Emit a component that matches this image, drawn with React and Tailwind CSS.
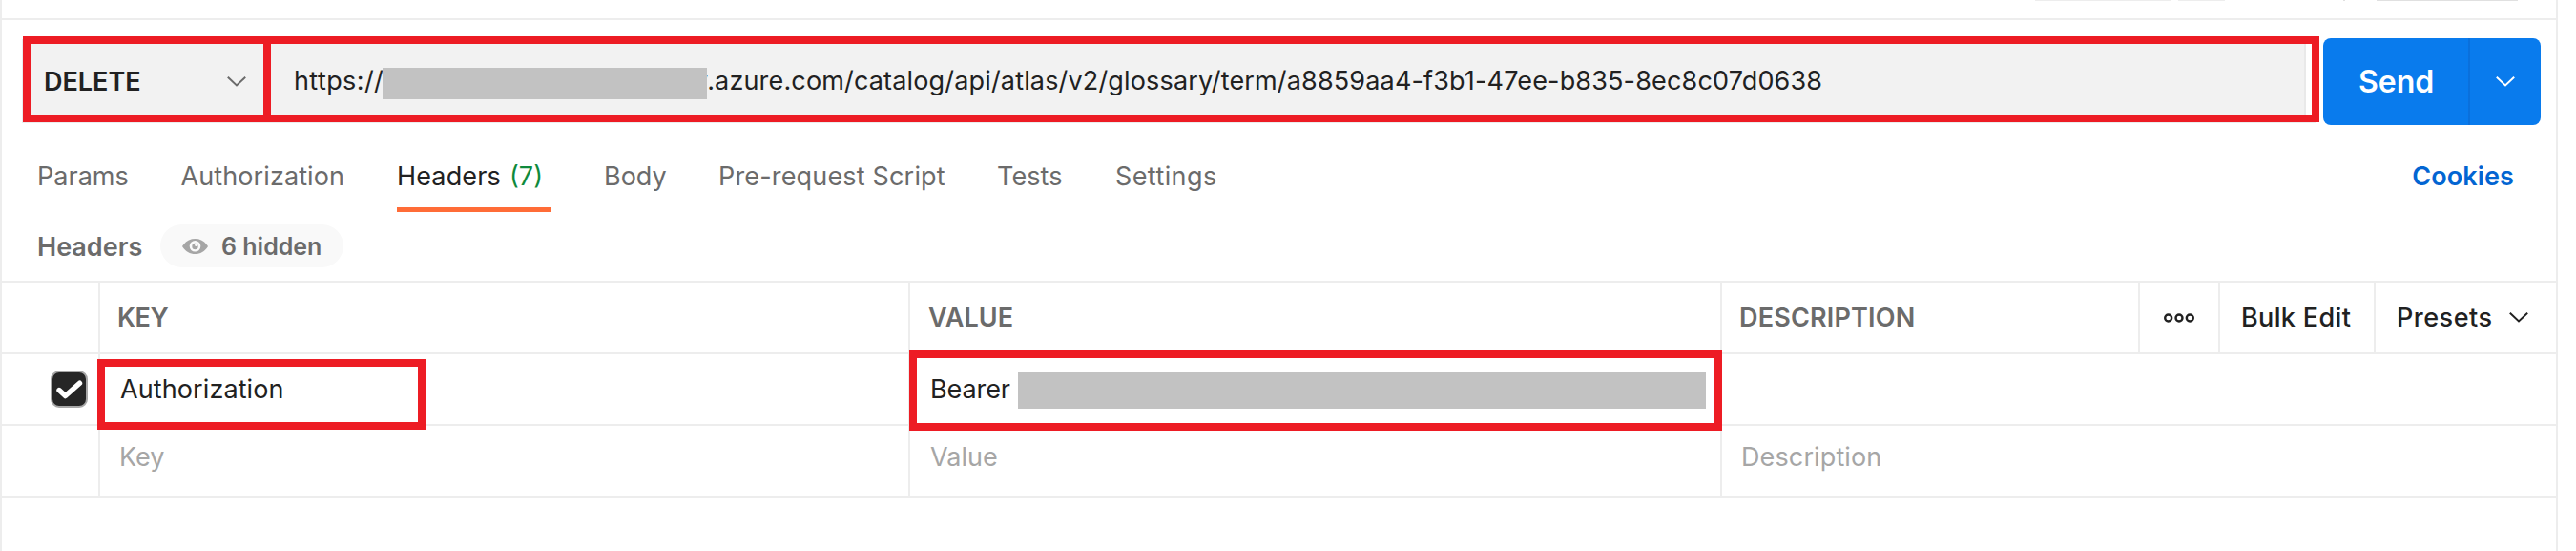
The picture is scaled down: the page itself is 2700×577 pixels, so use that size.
import React from "react";

function Chevron({ className }) {
  return (
    <svg viewBox="0 0 20 11" className={`h-[11px] w-5 shrink-0 ${className}`} fill="none" stroke="currentColor" strokeWidth="2">
      <path d="M0.8 0.8 10 9.4 19.2 0.8" />
    </svg>
  );
}

function EyeIcon() {
  return (
    <svg viewBox="0 0 27 16" className="h-4 w-[27px] shrink-0">
      <path d="M0 8C3.5 2.6 8 0 13.5 0S23.5 2.6 27 8C23.5 13.4 19 16 13.5 16S3.5 13.4 0 8Z" fill="#a6a6a6" />
      <circle cx="13.5" cy="7.8" r="5.8" fill="#fafafa" />
      <circle cx="13.5" cy="8" r="3.2" fill="#a6a6a6" />
      <circle cx="14.8" cy="6.4" r="1.7" fill="#fafafa" />
    </svg>
  );
}

function Checkbox() {
  return (
    <span className="flex size-[39px] items-center justify-center rounded-[9px] border-2 border-[#a8a8a8] bg-[#262626]">
      <svg viewBox="0 0 35 35" className="size-[35px]" fill="none" stroke="#fff" strokeWidth="5.4" strokeLinecap="round" strokeLinejoin="round">
        <path d="M7 18.6 13.5 24.6 28.5 11.2" />
      </svg>
    </span>
  );
}

function MoreIcon() {
  return (
    <svg viewBox="0 0 32 10" className="h-2.5 w-8" fill="none" stroke="#212121" strokeWidth="2.4">
      <circle cx="4.7" cy="5" r="3.5" />
      <circle cx="16" cy="5" r="3.5" />
      <circle cx="27.3" cy="5" r="3.5" />
    </svg>
  );
}

function TopStrip() {
  return (
    <div className="flex h-[21px] items-start border-b-2 border-[#ededed] pl-[2131px]">
      <span className="h-px w-[142px] bg-[#ededed]" />
      <span className="ml-2 h-px w-[49px] bg-[#ededed]" />
      <span className="ml-[124px] h-px w-0.5 bg-[#e0e0e0]" />
      <span className="ml-[33px] h-px w-[148px] bg-[#e0e0e0]" />
    </div>
  );
}

function RequestBar() {
  return (
    <div className="flex h-[109px] pt-[17px] pl-[19px]">
      <div className="h-[92px] w-[2410px]">
        <div className="ml-[3px] flex h-[90px] w-[2407px] border-8 border-[#ed1c24] bg-white shadow-[-2px_2px_0_-1px_#e9eded]">
          <div className="flex w-[244px] items-center justify-between bg-[#f2f2f2] pr-[18px] pl-[14px]">
            <span className="mt-1.5 text-[27px] leading-8 font-semibold text-[#212121]">DELETE</span>
            <Chevron className="mt-1 text-[#6b6b6b]" />
          </div>
          <div className="w-2 shrink-0 bg-[#ed1c24]" />
          <div className="flex w-[2133px] items-center border-r-2 border-[#e9e9e9] bg-[#f2f2f2] pl-6 text-[27px] leading-8 text-[#212121]">
            <span className="mt-1 w-[93px] shrink-0 tracking-[0.4px]">https://</span>
            <span className="relative z-10 mt-[9px] h-[33px] w-[340px] shrink-0 bg-[#c2c2c2]" />
            <span className="mt-1 -ml-[14px] tracking-[0.16px]">y.azure.com/catalog/api/atlas/v2/glossary/term/a8859aa4-f3b1-47ee-b835-8ec8c07d0638</span>
          </div>
        </div>
      </div>
      <div className="mt-0.5 ml-1 flex h-[91px] w-[228px] overflow-hidden rounded-lg bg-[#097bed] text-white">
        <span className="flex w-[152px] items-center pl-[37px] text-[32px] leading-10 font-semibold">Send</span>
        <span className="w-0.5 bg-[#0a70dc]" />
        <span className="flex flex-1 items-center justify-center">
          <Chevron className="mr-px" />
        </span>
      </div>
    </div>
  );
}

function Tabs() {
  return (
    <div className="flex h-[92px] items-start pt-[37px] pl-[37px] text-[27px] leading-9 text-[#6b6b6b]">
      <span className="w-[150.5px] tracking-[0.03px]">Params</span>
      <span className="w-[226.5px] tracking-[0.1px]">Authorization</span>
      <span className="flex h-[55px] w-[162px] border-b-[5px] border-[#ff6c37]">
        <span className="w-[118px] tracking-[0.15px] text-[#212121]">Headers</span>
        <span className="text-[#0f8a3c]">(7)</span>
      </span>
      <span className="ml-[55px] w-[120px]">Body</span>
      <span className="w-[292px] tracking-[0.17px]">Pre-request Script</span>
      <span className="w-[124px] tracking-[0.1px]">Tests</span>
      <span className="tracking-[0.4px]">Settings</span>
      <span className="mr-[44px] ml-auto font-semibold tracking-[0.1px] text-[#0265d2]">Cookies</span>
    </div>
  );
}

function HeadersTitle() {
  return (
    <div className="flex h-[72px] items-start pt-[13px] pl-[37px] font-semibold text-[#6b6b6b]">
      <span className="w-[129px] text-[27px] leading-[48px]">Headers</span>
      <span className="flex h-[45px] w-48 items-center rounded-full bg-[#f9f9f9] pl-[23px]">
        <EyeIcon />
        <span className="ml-[14px] text-[25px] leading-8">6 hidden</span>
      </span>
    </div>
  );
}

const COLUMNS = "grid grid-cols-[101px_849px_851px_1fr] h-[75px] border-b-2 border-[#ededed] text-[27px] leading-8";
const CELL = "border-l-2 border-[#ededed]";

function HeadersTable() {
  return (
    <div className="border-t-2 border-[#ededed]">
      <div className={`${COLUMNS} font-semibold text-[#6b6b6b]`}>
        <span />
        <span className={`${CELL} flex items-center pl-[18px] tracking-[-0.4px]`}>KEY</span>
        <span className={`${CELL} flex items-center pl-[19px] tracking-[0.1px]`}>VALUE</span>
        <span className={`${CELL} flex`}>
          <span className="flex flex-1 items-center pl-[18px] tracking-[0.18px]">DESCRIPTION</span>
          <span className={`${CELL} flex w-[84px] items-center justify-center`}>
            <MoreIcon />
          </span>
          <span className={`${CELL} flex w-[163px] items-center pl-[22px] font-medium tracking-[0.35px] text-[#212121]`}>Bulk Edit</span>
          <span className={`${CELL} flex w-[191px] items-center pl-[22px] font-medium tracking-[0.5px] text-[#212121]`}>
            <span className="w-[118px]">Presets</span>
            <Chevron className="text-[#212121]" />
          </span>
        </span>
      </div>
      <div className={`${COLUMNS} text-[#212121]`}>
        <span className="flex items-center pl-[51px]">
          <Checkbox />
        </span>
        <span className={`${CELL} relative`}>
          <span className="absolute top-[5px] -left-[3px] flex h-[74px] w-[344px] items-center border-8 border-[#ed1c24] bg-white pb-2.5 pl-4 tracking-[0.1px]">
            Authorization
          </span>
        </span>
        <span className={`${CELL} relative`}>
          <span className="absolute -top-1 -left-px flex h-[84px] w-[852px] items-center border-8 border-[#ed1c24] bg-white pl-[14px]">
            <span className="mb-0.5 w-[92px] shrink-0 tracking-[-0.1px]">Bearer</span>
            <span className="h-[38px] w-[721px] bg-[#c2c2c2]" />
          </span>
        </span>
        <span className={CELL} />
      </div>
      <div className={`${COLUMNS} text-[#a6a6a6]`}>
        <span />
        <span className={`${CELL} pt-[17px] pl-5`}>Key</span>
        <span className={`${CELL} pt-[17px] pl-[21px]`}>Value</span>
        <span className={`${CELL} pt-[17px] pl-5 tracking-[0.12px]`}>Description</span>
      </div>
    </div>
  );
}

export default function App() {
  return (
    <div className="h-[577px] w-[2700px] overflow-hidden bg-white font-['Inter',sans-serif]">
      <div className="h-full w-[2681px] border-x-2 border-[#ededed]">
        <TopStrip />
        <RequestBar />
        <Tabs />
        <HeadersTitle />
        <HeadersTable />
      </div>
    </div>
  );
}
